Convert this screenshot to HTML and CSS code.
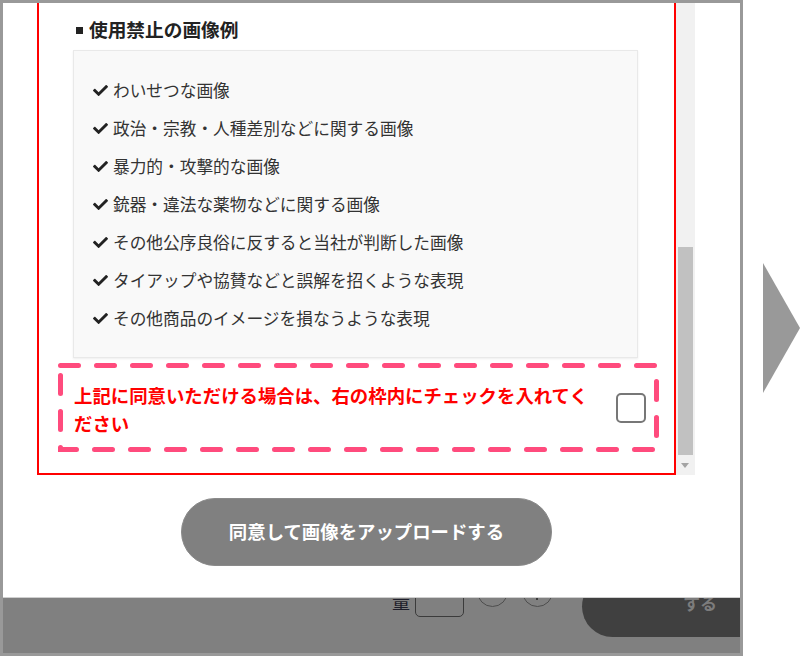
FILE: index.html
```html
<!DOCTYPE html>
<html lang="ja">
<head>
<meta charset="UTF-8" />
<meta name="viewport" content="width=device-width, initial-scale=1" />
<title>画像アップロード - 使用禁止の画像例</title>
<link rel="stylesheet" href="styles.css">
</head>
<body>
  <div class="stage">
    <div class="device">

      <!-- モーダル（スクロール中の状態） -->
      <div class="modal">
        <div class="scroll-row">
          <div class="scroll-view">
            <section class="terms">
              <h3 class="terms-title"><span class="square"></span>使用禁止の画像例</h3>
              <ul class="ng-list">
                <li><svg class="check" viewBox="0 0 512 512" aria-hidden="true"><path d="M173.9 439.4l-166.4-166.4c-10-10-10-26.2 0-36.2l36.2-36.2c10-10 26.2-10 36.2 0L192 312.7 432.1 72.6c10-10 26.2-10 36.2 0l36.2 36.2c10 10 10 26.2 0 36.2l-294.4 294.4c-10 10-26.2 10-36.2 0z"/></svg>わいせつな画像</li>
                <li><svg class="check" viewBox="0 0 512 512" aria-hidden="true"><path d="M173.9 439.4l-166.4-166.4c-10-10-10-26.2 0-36.2l36.2-36.2c10-10 26.2-10 36.2 0L192 312.7 432.1 72.6c10-10 26.2-10 36.2 0l36.2 36.2c10 10 10 26.2 0 36.2l-294.4 294.4c-10 10-26.2 10-36.2 0z"/></svg>政治・宗教・人種差別などに関する画像</li>
                <li><svg class="check" viewBox="0 0 512 512" aria-hidden="true"><path d="M173.9 439.4l-166.4-166.4c-10-10-10-26.2 0-36.2l36.2-36.2c10-10 26.2-10 36.2 0L192 312.7 432.1 72.6c10-10 26.2-10 36.2 0l36.2 36.2c10 10 10 26.2 0 36.2l-294.4 294.4c-10 10-26.2 10-36.2 0z"/></svg>暴力的・攻撃的な画像</li>
                <li><svg class="check" viewBox="0 0 512 512" aria-hidden="true"><path d="M173.9 439.4l-166.4-166.4c-10-10-10-26.2 0-36.2l36.2-36.2c10-10 26.2-10 36.2 0L192 312.7 432.1 72.6c10-10 26.2-10 36.2 0l36.2 36.2c10 10 10 26.2 0 36.2l-294.4 294.4c-10 10-26.2 10-36.2 0z"/></svg>銃器・違法な薬物などに関する画像</li>
                <li><svg class="check" viewBox="0 0 512 512" aria-hidden="true"><path d="M173.9 439.4l-166.4-166.4c-10-10-10-26.2 0-36.2l36.2-36.2c10-10 26.2-10 36.2 0L192 312.7 432.1 72.6c10-10 26.2-10 36.2 0l36.2 36.2c10 10 10 26.2 0 36.2l-294.4 294.4c-10 10-26.2 10-36.2 0z"/></svg>その他公序良俗に反すると当社が判断した画像</li>
                <li><svg class="check" viewBox="0 0 512 512" aria-hidden="true"><path d="M173.9 439.4l-166.4-166.4c-10-10-10-26.2 0-36.2l36.2-36.2c10-10 26.2-10 36.2 0L192 312.7 432.1 72.6c10-10 26.2-10 36.2 0l36.2 36.2c10 10 10 26.2 0 36.2l-294.4 294.4c-10 10-26.2 10-36.2 0z"/></svg>タイアップや協賛などと誤解を招くような表現</li>
                <li><svg class="check" viewBox="0 0 512 512" aria-hidden="true"><path d="M173.9 439.4l-166.4-166.4c-10-10-10-26.2 0-36.2l36.2-36.2c10-10 26.2-10 36.2 0L192 312.7 432.1 72.6c10-10 26.2-10 36.2 0l36.2 36.2c10 10 10 26.2 0 36.2l-294.4 294.4c-10 10-26.2 10-36.2 0z"/></svg>その他商品のイメージを損なうような表現</li>
              </ul>

              <!-- 同意チェック（ピンクの点線枠） -->
              <label class="agree">
                <svg class="agree-border" width="603" height="91" aria-hidden="true">
                  <rect x="3.5" y="3.5" width="596" height="84" />
                </svg>
                <span class="agree-text">上記に同意いただける場合は、右の枠内にチェックを入れてください</span>
                <span class="agree-check"></span>
              </label>
            </section>
          </div>

          <div class="scrollbar" aria-hidden="true">
            <div class="scrollbar-track"></div>
            <div class="scrollbar-thumb"></div>
            <div class="scrollbar-btn"><span class="scrollbar-arrow"></span></div>
          </div>
        </div>

        <div class="modal-foot">
          <button class="upload-btn" type="button">同意して画像をアップロードする</button>
        </div>
      </div>

      <!-- 背面のページ（暗くなっている部分） -->
      <div class="page-under" aria-hidden="true">
        <div class="qty-row">
          <span class="qty-label">量</span>
          <span class="qty-input"></span>
          <span class="qty-circle"></span>
          <span class="qty-circle plus"></span>
          <span class="cart-btn">する</span>
        </div>
      </div>
    </div>

    <div class="next-arrow" aria-hidden="true">
      <svg width="37" height="130" viewBox="0 0 37 130"><polygon points="0,0 37,65 0,130" /></svg>
    </div>
  </div>
</body>
</html>
```

FILE: styles.css
```css
* {
  box-sizing: border-box;
}
body {
  margin: 0;
  background: #fff;
  font-family: "Noto Sans CJK JP", "Noto Sans", sans-serif;
  color: #333;
}
.stage {
  display: flex;
  width: 800px;
  height: 656px;
  overflow: hidden;
}
.device {
  flex: none;
  width: 743px;
  height: 656px;
  border: 3px solid #999;
  display: flex;
  flex-direction: column;
  overflow: hidden;
}
.modal {
  flex: none;
  height: 595px;
  background: #fff;
  border-bottom: 1px solid #cfcfcf;
  display: flex;
  flex-direction: column;
}
.scroll-row {
  flex: none;
  height: 472px;
  display: flex;
}
.scroll-view {
  flex: none;
  width: 673px;
  overflow: hidden;
}
.terms {
  margin-left: 34px;
  width: 639px;
  height: 472px;
  border: 2px solid #ff0000;
  border-top: none;
  padding: 13px 14px 0 18px;
}
.terms-title {
  margin: 0 0 0 19px;
  display: flex;
  align-items: center;
  gap: 6px;
  font-size: 18.7px;
  line-height: 26px;
  font-weight: 700;
  color: #222;
}
.square {
  width: 7px;
  height: 7px;
  background: #222;
  margin-top: 2px;
}
.ng-list {
  list-style: none;
  margin: 8px 22px 0 16px;
  padding: 20px 0;
  background: #f9f9f9;
  border: 1px solid #e9e9e9;
  box-shadow: 0 1px 2px rgba(0, 0, 0, 0.07);
}
.ng-list li {
  display: flex;
  align-items: center;
  gap: 5px;
  padding-left: 19px;
  line-height: 38px;
  font-size: 16.7px;
  color: #333;
  white-space: nowrap;
}
.check {
  width: 15px;
  height: 15px;
  fill: #222;
  flex: none;
}
.agree {
  position: relative;
  margin-top: 4px;
  width: 603px;
  height: 91px;
  display: flex;
  align-items: center;
  padding: 0 14px 0 17px;
  gap: 12px;
  cursor: pointer;
}
.agree-border {
  position: absolute;
  left: 0;
  top: 0;
}
.agree-border rect {
  fill: none;
  stroke: #ff4b7d;
  stroke-width: 5;
  stroke-dasharray: 18 18;
  stroke-linecap: round;
}
.agree-text {
  flex: none;
  width: 525px;
  margin-top: 3px;
  font-size: 18.4px;
  line-height: 28px;
  font-weight: 700;
  color: #ff0000;
}
.agree-check {
  flex: none;
  margin-left: 5px;
  width: 30px;
  height: 30px;
  border: 2px solid #777;
  border-radius: 5px;
  background: #fff;
}
.scrollbar {
  flex: none;
  width: 19px;
  background: #f1f1f1;
  display: flex;
  flex-direction: column;
}
.scrollbar-track {
  flex: 1;
}
.scrollbar-thumb {
  height: 208px;
  margin: 0 2px;
  background: #c1c1c1;
}
.scrollbar-btn {
  height: 20px;
  display: flex;
  justify-content: center;
  align-items: center;
}
.scrollbar-arrow {
  width: 0;
  height: 0;
  border-left: 4px solid transparent;
  border-right: 4px solid transparent;
  border-top: 5px solid #a3a3a3;
  margin-left: -1px;
}
.modal-foot {
  flex: 1;
  padding: 23px 0 0 178px;
}
.upload-btn {
  width: 371px;
  height: 68px;
  border: 1px solid #8a8a8a;
  border-radius: 34px;
  background: #808080;
  color: #fff;
  font-family: inherit;
  font-size: 18.4px;
  font-weight: 700;
  padding: 0 0 2px;
  cursor: pointer;
}
.page-under {
  flex: 1;
  background: #808080;
  overflow: hidden;
}
.qty-row {
  display: flex;
  align-items: flex-start;
  margin-top: -22px;
  padding-left: 389px;
}
.qty-row > span {
  flex: none;
}
.qty-label {
  margin-top: 16px;
  font-size: 18px;
  line-height: 18px;
  color: #1e1e2a;
}
.qty-input {
  margin: 7px 0 0 5px;
  width: 49px;
  height: 34px;
  border: 1.5px solid #3b3b3b;
  border-radius: 5px;
}
.qty-circle {
  position: relative;
  margin-left: 13px;
  width: 31px;
  height: 31px;
  border: 1.5px solid #4e4e4e;
  border-radius: 50%;
}
.qty-circle + .qty-circle {
  margin-left: 14px;
}
.qty-circle.plus::after {
  content: "";
  position: absolute;
  left: 13px;
  top: 6px;
  width: 2px;
  height: 17px;
  background: #3a3a3a;
}
.cart-btn {
  margin-left: 29px;
  width: 190px;
  height: 61px;
  background: #404040;
  border-radius: 36px;
  padding: 18px 0 0 101px;
  font-size: 17px;
  line-height: 18px;
  font-weight: 700;
  color: #7c7c7c;
}
.next-arrow {
  flex: 1;
  display: flex;
  align-items: center;
  padding-left: 20px;
}
.next-arrow polygon {
  fill: #999;
}
```
